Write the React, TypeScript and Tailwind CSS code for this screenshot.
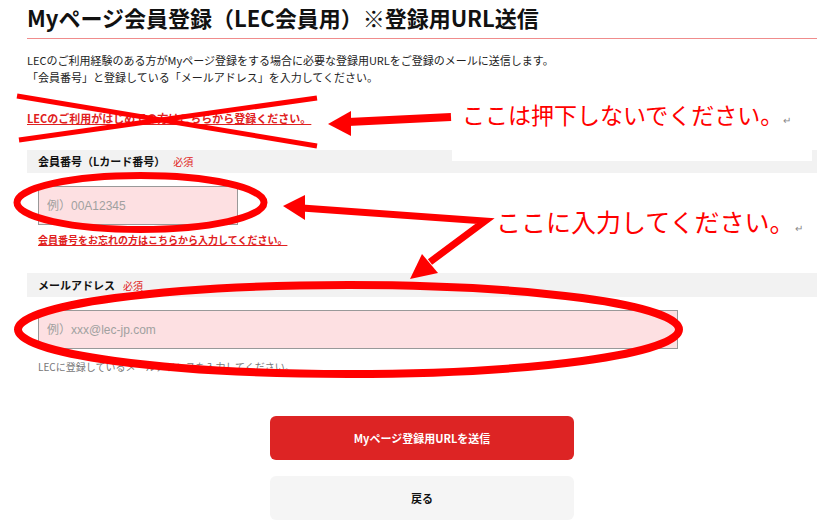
import React from "react";

const RequiredTag = () => (
  <span className="ml-[8px] text-[10px] font-normal text-[#e02020]">必須</span>
);

const FieldHeading = ({ label, tall }: { label: string; tall?: boolean }) => (
  <div
    className={`flex items-center bg-[#f2f2f2] pl-[11px] ${tall ? "h-[24px]" : "h-[23px]"}`}
  >
    <span className="text-[11px] font-bold text-[#111]">{label}</span>
    <RequiredTag />
  </div>
);

// hand-drawn red marks laid over the screenshot
const Annotations = () => (
  <>
    <div className="absolute left-[452px] top-[98px] h-[63px] w-[360px] bg-white pl-[10px]">
      <span className="text-[23px] leading-[32px] text-[#ff0000]">
        ここは押下しないでください。
      </span>
      <span className="text-[10px] text-[#888]">↵</span>
    </div>
    <div className="absolute left-[496px] top-[205px] whitespace-nowrap">
      <span className="text-[25px] leading-[32px] text-[#ff0000]">
        ここに入力してください。
      </span>
      <span className="text-[10px] text-[#888]">↵</span>
    </div>
    <svg
      className="pointer-events-none absolute left-0 top-0"
      width="838"
      height="521"
      viewBox="0 0 838 521"
    >
      {/* cross over the first-time link */}
      <line x1="17" y1="96" x2="317" y2="146" stroke="#ff0000" strokeWidth="5" />
      <line x1="19" y1="140" x2="317" y2="98" stroke="#ff0000" strokeWidth="5" />

      {/* arrow to the crossed link */}
      <line x1="348" y1="122" x2="451" y2="117" stroke="#ff0000" strokeWidth="8" />
      <polygon points="328,124 351,111 351,136" fill="#ff0000" />

      {/* V-shaped arrows to the two inputs */}
      <polyline
        points="302,208 485,221 430,262"
        fill="none"
        stroke="#ff0000"
        strokeWidth="7"
        strokeLinejoin="miter"
      />
      <polygon points="283,206 305,195 305,220" fill="#ff0000" />
      <polygon points="410,279 422,254 438,273" fill="#ff0000" />

      {/* circles round the inputs */}
      <ellipse cx="140.5" cy="202.5" rx="123.5" ry="27" fill="none" stroke="#ff0000" strokeWidth="7" />
      <ellipse cx="348.5" cy="329.5" rx="330.5" ry="44.5" fill="none" stroke="#ff0000" strokeWidth="8" />
    </svg>
  </>
);

const App = () => {
  return (
    <div className="relative h-[521px] w-[838px] overflow-hidden bg-white font-['Noto_Sans_CJK_JP','Noto_Sans',sans-serif] text-[#222]">
      <div className="ml-[27px] w-[790px]">
        <h1 className="border-b border-[#f08c8c] pb-[6px] pt-[2px] text-[22px] font-bold leading-[30px] text-[#111]">
          Myページ会員登録（LEC会員用）※登録用URL送信
        </h1>

        <p className="mt-[13px] text-[11px] leading-[17px]">
          LECのご利用経験のある方がMyページ登録をする場合に必要な登録用URLをご登録のメールに送信します。
          <br />
          「会員番号」と登録している「メールアドレス」を入力してください。
        </p>

        <p className="mt-[24px] text-[11px] leading-[17px]">
          <a href="#" className="font-bold text-[#e02020] underline">
            LECのご利用がはじめての方はこちらから登録ください。
          </a>
        </p>

        {/* member number */}
        <div className="mt-[23px]">
          <FieldHeading label="会員番号（Lカード番号）" />
          <div className="pl-[11px]">
            <input
              type="text"
              placeholder="例）00A12345"
              className="mt-[13px] block h-[39px] w-[200px] border border-[#999] bg-[#fde0e2] px-[8px] font-['Liberation_Sans','Noto_Sans_CJK_JP',sans-serif] text-[12px] placeholder:text-[#a0a0a0]"
            />
            <p className="mt-[6px] text-[10px] leading-[17px]">
              <a href="#" className="font-bold text-[#e02020] underline">
                会員番号をお忘れの方はこちらから入力してください。
              </a>
            </p>
          </div>
        </div>

        {/* mail address */}
        <div className="mt-[25px]">
          <FieldHeading label="メールアドレス" tall />
          <div className="pl-[11px]">
            <input
              type="email"
              placeholder="例）xxx@lec-jp.com"
              className="mt-[13px] block h-[39px] w-[640px] border border-[#999] bg-[#fde0e2] px-[8px] font-['Liberation_Sans','Noto_Sans_CJK_JP',sans-serif] text-[12px] placeholder:text-[#a0a0a0]"
            />
            <p className="mt-[9px] text-[10px] leading-[17px] text-[#777]">
              LECに登録しているメールアドレスを入力してください。
            </p>
          </div>
        </div>

        <button className="mx-auto mt-[41px] block h-[44px] w-[304px] rounded-[6px] bg-[#dd2424] text-[11px] font-bold text-white">
          Myページ登録用URLを送信
        </button>
        <button className="mx-auto mt-[16px] block h-[44px] w-[304px] rounded-[6px] bg-[#f5f5f5] text-[11px] font-bold text-[#111]">
          戻る
        </button>
      </div>

      <Annotations />
    </div>
  );
};

export default App;
